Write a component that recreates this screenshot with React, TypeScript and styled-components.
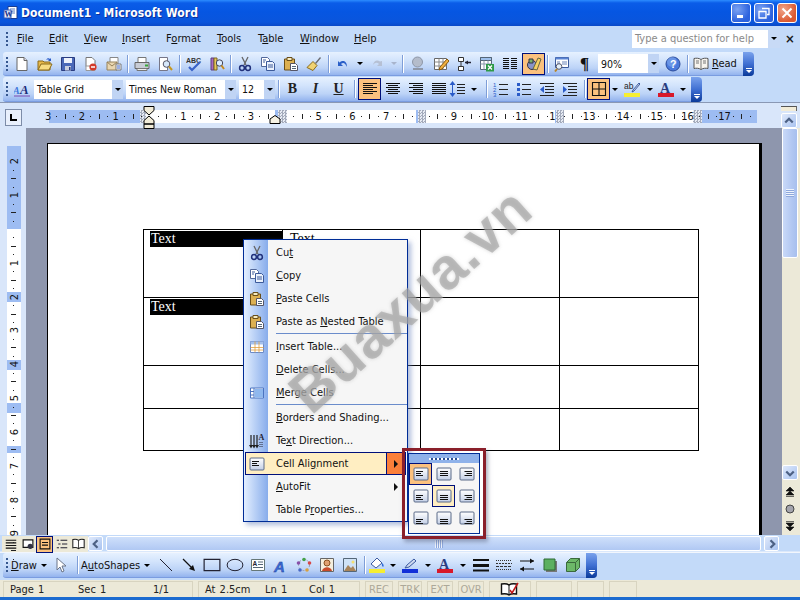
import React from 'react';
import styled, { createGlobalStyle } from 'styled-components';

const uiFont = `"DejaVu Sans Condensed", "DejaVu Sans", sans-serif`;

const Global = createGlobalStyle`
    html, body { margin: 0; padding: 0; overflow: hidden; background: #c3daf9; }
    * { box-sizing: border-box; }
`;

const Window = styled.div`
    position: relative;
    width: 800px;
    height: 600px;
    overflow: hidden;
    display: flex;
    flex-direction: column;
    background: #c3daf9;
    font-family: ${uiFont};
    font-size: 11px;
    color: #111;
`;

const TitleBar = styled.div`
    height: 26px;
    flex: none;
    display: flex;
    align-items: center;
    padding: 0 3px 0 3px;
    background: linear-gradient(to bottom, #2c8cff 0, #0a5ce8 3px, #0656e2 12px, #0a55dc 22px, #0a49c8 26px);
`;

const Title = styled.span`
    margin-left: 2px;
    color: #fff;
    font-size: 12px;
    font-weight: bold;
    letter-spacing: 0.1px;
    text-shadow: 1px 1px 0 #0a2f98;
    flex: 1;
`;

const WinBtn = styled.div<{ $close?: boolean }>`
    width: 20px;
    height: 20px;
    margin-left: 3px;
    border: 1px solid #fff;
    border-radius: 3px;
    display: flex;
    align-items: center;
    justify-content: center;
    background: ${({ $close }) =>
        $close
            ? 'radial-gradient(circle at 30% 30%, #f0a58a, #dc5a32 70%)'
            : 'radial-gradient(circle at 30% 30%, #7ba2f2, #2c62de 70%)'};
`;

const MenuBar = styled.div`
    height: 25px;
    flex: none;
    display: flex;
    align-items: center;
    padding-left: 3px;
    background: #c3daf9;
`;

const MenuItems = styled.div`
    display: flex;
    flex: 1;
    margin-left: 2px;
    margin-top: -1px;
`;

const MenuLabel = styled.span<{ $w: number }>`
    width: ${({ $w }) => $w}px;
    padding-left: 5px;
    font-size: 11px;
    white-space: nowrap;
`;

const Key = styled.span`
    text-decoration: underline;
`;

const HelpBox = styled.div`
    width: 148px;
    height: 18px;
    display: flex;
    background: #fff;
    color: #8a8a8a;
    font-size: 11px;
    align-items: center;
    padding-left: 3px;
    justify-content: space-between;
`;

const HelpArrow = styled.div`
    width: 12px;
    height: 18px;
    background: #c8daf6;
    display: flex;
    align-items: center;
    justify-content: center;
`;

const CloseDoc = styled.div`
    width: 20px;
    margin-right: 0;
    text-align: center;
    font-size: 13px;
    font-weight: bold;
    color: #1a1a1a;
`;

const Band = styled.div<{ $h: number }>`
    height: ${({ $h }) => $h}px;
    flex: none;
    display: flex;
    align-items: flex-end;
    padding-left: 3px;
    background: #c3daf9;
`;

const Toolbar = styled.div<{ $w: number; $h: number; $lift?: number }>`
    width: ${({ $w }) => $w}px;
    height: ${({ $h }) => $h}px;
    margin-bottom: ${({ $lift }) => $lift ?? 0}px;
    display: flex;
    align-items: center;
    border-radius: 3px 4px 4px 3px;
    background: linear-gradient(to bottom, #e6f1ff 0, #d3e4fc 35%, #bcd3f7 70%, #93b3ee 100%);
    border-bottom: 1px solid #7a9ce0;
`;

const Gripper = styled.div`
    width: 2px;
    height: 14px;
    margin: 0 2px 0 3px;
    flex: none;
    background: repeating-linear-gradient(to bottom, #35578f 0, #35578f 2px, transparent 2px, transparent 4px);
`;

const Tool = styled.div<{ $w?: number; $active?: boolean; $left?: number }>`
    width: ${({ $w }) => $w ?? 23}px;
    height: 22px;
    flex: none;
    margin-left: ${({ $left }) => $left ?? 0}px;
    display: flex;
    align-items: center;
    justify-content: center;
    ${({ $active }) => ($active ? 'background: #fbc17e; border: 1px solid #00107a;' : '')}
`;

const Sep = styled.div<{ $w?: number }>`
    width: ${({ $w }) => $w ?? 5}px;
    height: 18px;
    flex: none;
    display: flex;
    justify-content: center;
    &::before {
        content: '';
        width: 1px;
        background: #7e9ed8;
        box-shadow: 1px 0 0 #fff;
    }
`;

const Drop = styled.div<{ $off?: boolean }>`
    width: 0;
    height: 0;
    border-left: 3px solid transparent;
    border-right: 3px solid transparent;
    border-top: 3px solid ${({ $off }) => ($off ? '#a8b4cc' : '#000')};
`;

const DropTool = styled.div<{ $w?: number }>`
    width: ${({ $w }) => $w ?? 11}px;
    height: 22px;
    flex: none;
    display: flex;
    align-items: center;
    justify-content: center;
`;

const Chevron = styled.div`
    width: 11px;
    align-self: stretch;
    margin-left: auto;
    margin-bottom: -1px;
    border-radius: 0 4px 4px 0;
    background: linear-gradient(to bottom, #7aa2ec 0, #3f6fd2 50%, #0b3a9a 100%);
    display: flex;
    flex-direction: column;
    align-items: center;
    justify-content: flex-end;
    padding-bottom: 3px;
    gap: 1px;
    &::before {
        content: '';
        width: 6px;
        height: 1px;
        background: #fff;
    }
    &::after {
        content: '';
        border-left: 3px solid transparent;
        border-right: 3px solid transparent;
        border-top: 3px solid #fff;
    }
`;

const Combo = styled.div<{ $w: number; $left?: number; $right?: number }>`
    width: ${({ $w }) => $w}px;
    height: 19px;
    flex: none;
    display: flex;
    align-items: center;
    justify-content: space-between;
    background: #fff;
    padding-left: 3px;
    font-size: 10.5px;
    white-space: nowrap;
    margin-left: ${({ $left }) => $left ?? 0}px;
    margin-right: ${({ $right }) => $right ?? 3}px;
`;

const ComboArrow = styled.div`
    width: 11px;
    height: 19px;
    background: #c0d4f4;
    display: flex;
    align-items: center;
    justify-content: center;
`;

const FmtLetter = styled.span<{ $i?: boolean; $u?: boolean }>`
    font-family: "Liberation Serif", serif;
    font-size: 14px;
    font-weight: bold;
    font-style: ${({ $i }) => ($i ? 'italic' : 'normal')};
    text-decoration: ${({ $u }) => ($u ? 'underline' : 'none')};
    color: #222;
`;

const Pilcrow = styled.span`
    font-family: "Liberation Serif", serif;
    font-size: 17px;
    font-weight: bold;
`;

const ReadBtn = styled.div`
    width: 50px;
    flex: none;
    display: flex;
    align-items: center;
    gap: 3px;
    padding-left: 3px;
    font-size: 11px;
`;

const TextTool = styled.div<{ $w: number }>`
    width: ${({ $w }) => $w}px;
    flex: none;
    display: flex;
    align-items: center;
    gap: 4px;
    font-size: 11px;
    padding-left: 1px;
`;

const RulerRow = styled.div`
    height: 26px;
    flex: none;
    position: relative;
    display: flex;
    align-items: flex-start;
    padding: 6px 3px 0 5px;
    background: #d9e6fa;
    border-top: 1px solid #8a98b4;
`;

const TabSelector = styled.div`
    width: 17px;
    height: 17px;
    flex: none;
    border: 1px solid #7d8ca8;
    background: #e9f0fc;
    display: flex;
    align-items: center;
    justify-content: center;
`;

const HRuler = styled.div`
    position: relative;
    width: 708px;
    height: 13px;
    margin-left: 27px;
    margin-top: 1px;
    display: flex;
`;

const Seg = styled.div<{ $w: number; $kind: 'blue' | 'white' | 'hatch' }>`
    width: ${({ $w }) => $w}px;
    flex: none;
    background: ${({ $kind }) =>
        $kind === 'blue'
            ? '#9dbcf2'
            : $kind === 'white'
              ? '#fff'
              : 'repeating-conic-gradient(#a4abbb 0 25%, #e8ecf4 0 50%) 0 0 / 3px 3px'};
`;

const HNum = styled.span`
    position: absolute;
    top: -1px;
    width: 16px;
    margin-left: -8px;
    text-align: center;
    font-size: 11px;
    line-height: 15px;
    color: #111;
`;

const HTick = styled.i<{ $long?: boolean }>`
    position: absolute;
    width: 1px;
    top: ${({ $long }) => ($long ? 4 : 6)}px;
    height: ${({ $long }) => ($long ? 5 : 1)}px;
    background: #222;
`;

const Indent = styled.svg`
    position: absolute;
    overflow: visible;
`;

const SplitCol = styled.div`
    position: absolute;
    right: 3px;
    top: 3px;
    width: 16px;
    display: flex;
    flex-direction: column;
    gap: 2px;
`;

const SplitBox = styled.div`
    height: 5px;
    background: #f2ecd8;
    border-top: 1px solid #555;
    border-right: 1px solid #666;
`;

const ScrollBtn = styled.div<{ $w?: number }>`
    width: ${({ $w }) => $w ?? 15}px;
    height: 15px;
    flex: none;
    border: 1px solid #fff;
    border-radius: 2px;
    background: linear-gradient(135deg, #dfe9fb, #a9c3f0);
    display: flex;
    align-items: center;
    justify-content: center;
`;

const Middle = styled.div`
    height: 407px;
    flex: none;
    display: flex;
`;

const VRulerCol = styled.div`
    width: 26px;
    flex: none;
    background: #d9e6fa;
    padding: 18px 5px 0 7px;
`;

const VRuler = styled.div`
    position: relative;
    width: 14px;
    height: 389px;
    display: flex;
    flex-direction: column;
`;

const VSeg = styled.div<{ $h: number; $blue?: boolean }>`
    height: ${({ $h }) => $h}px;
    flex: none;
    background: ${({ $blue }) => ($blue ? '#9dbcf2' : '#fff')};
`;

const VNum = styled.span`
    position: absolute;
    left: 0;
    width: 14px;
    height: 14px;
    margin-top: -7px;
    display: flex;
    align-items: center;
    justify-content: center;
    transform: rotate(-90deg);
    font-size: 11px;
`;

const VTick = styled.i<{ $long?: boolean }>`
    position: absolute;
    left: ${({ $long }) => ($long ? 4 : 6)}px;
    width: ${({ $long }) => ($long ? 5 : 1)}px;
    height: 1px;
    background: #222;
`;

const Workspace = styled.div`
    flex: 1;
    overflow: hidden;
    background: #8e96ad;
    padding: 15px 0 0 21px;
`;

const Page = styled.div`
    width: 715px;
    height: 420px;
    padding: 85px 0 0 95px;
    background: #fff;
    border-top: 1px solid #000;
    border-left: 1px solid #000;
    border-right: 3px solid #000;
`;

const DocTable = styled.table`
    border-collapse: collapse;
    table-layout: fixed;
    width: 555px;
    font-family: "Liberation Serif", serif;
    font-size: 14px;
`;

const Td = styled.td<{ $h: number }>`
    height: ${({ $h }) => $h}px;
    border: 1px solid #000;
    vertical-align: top;
    padding: 0 0 0 6px;
    line-height: 16px;
`;

const CellText = styled.div<{ $selected?: boolean }>`
    padding-left: 1px;
    background: ${({ $selected }) => ($selected ? '#000' : 'transparent')};
    color: ${({ $selected }) => ($selected ? '#fff' : '#000')};
    margin-right: -1px;
    margin-top: 1px;
`;

const ScrollCol = styled.div`
    width: 18px;
    flex: none;
    display: flex;
    flex-direction: column;
    align-items: center;
    background: #ece9d8;
    padding-right: 3px;
`;

const VThumb = styled.div`
    width: 16px;
    height: 130px;
    flex: none;
    border: 1px solid #fff;
    border-radius: 2px;
    background: linear-gradient(to right, #c9d9f8, #b3c8f2 60%, #a7bfee);
    display: flex;
    align-items: center;
    justify-content: center;
    &::after {
        content: '';
        width: 8px;
        height: 8px;
        background: repeating-linear-gradient(to bottom, #eef3fc 0, #eef3fc 1px, #8ea8dc 1px, #8ea8dc 2px);
    }
`;

const VTrack = styled.div`
    flex: 1;
`;

const Browse = styled.div`
    height: 17px;
    flex: none;
    display: flex;
    align-items: center;
    justify-content: center;
`;

const ScrollGap = styled.div<{ $h: number }>`
    height: ${({ $h }) => $h}px;
    flex: none;
`;

const ViewBar = styled.div`
    height: 18px;
    flex: none;
    display: flex;
    align-items: flex-start;
    padding: 1px 21px 0 2px;
    background: linear-gradient(to bottom, #c3daf9 0, #c3daf9 16px, #f2f6fd 17px);
`;

const ViewBtns = styled.div`
    width: 86px;
    height: 16px;
    flex: none;
    display: flex;
    align-items: center;
    background: #ece9d8;
`;

const ViewBtn = styled.div<{ $active?: boolean }>`
    width: 17px;
    height: 17px;
    flex: none;
    display: flex;
    align-items: center;
    justify-content: center;
    ${({ $active }) => ($active ? 'background: #fbc17e; border: 1px solid #00107a;' : '')}
`;

const HTrack = styled.div`
    flex: 1;
    height: 15px;
    margin: 0 3px 0 3px;
    border: 1px solid #fff;
    border-radius: 2px;
    background: linear-gradient(to bottom, #cfe0fb, #b0c8f3);
    display: flex;
    align-items: center;
    justify-content: center;
    &::after {
        content: '';
        width: 8px;
        height: 8px;
        margin-left: 10px;
        background: repeating-linear-gradient(to right, #eef3fc 0, #eef3fc 1px, #8ea8dc 1px, #8ea8dc 2px);
    }
`;

const StatusBar = styled.div`
    height: 17px;
    flex: none;
    display: flex;
    align-items: center;
    padding-left: 3px;
    gap: 5px;
    background: #ece9d8;
`;

const StatusCell = styled.div<{ $w: number; $off?: boolean }>`
    position: relative;
    width: ${({ $w }) => $w}px;
    height: 16px;
    flex: none;
    display: flex;
    align-items: center;
    justify-content: ${({ $off }) => ($off ? 'center' : 'flex-start')};
    border: 1px solid #d8d4c0;
    border-bottom: 0;
    font-size: 11px;
    word-spacing: 1px;
    white-space: nowrap;
    color: ${({ $off }) => ($off ? '#aca899' : '#222')};
`;

const BookCell = styled(StatusCell)`
    justify-content: center;
`;

const StatusText = styled.span<{ $w: number }>`
    width: ${({ $w }) => $w}px;
    flex: none;
    padding-left: 6px;
`;

const BottomEdge = styled.div`
    height: 3px;
    flex: none;
    background: #1c6bd0;
`;

const CtxMenu = styled.div`
    position: absolute;
    left: 243px;
    top: 239px;
    width: 165px;
    padding-top: 1px;
    border: 1px solid #002d96;
    background: linear-gradient(to right, #e3efff, #87aceb) left / 24px 100% no-repeat, #f6f6f6;
    box-shadow: 3px 3px 5px rgba(110, 135, 190, 0.55);
    z-index: 2;
`;

const CtxItem = styled.div<{ $hot?: boolean }>`
    position: relative;
    height: 23px;
    margin: 0 1px;
    display: flex;
    align-items: center;
    font-size: 11px;
    color: #111;
    ${({ $hot }) => ($hot ? 'background: #ffeec2; outline: 1px solid #00107a; outline-offset: -1px;' : '')}
`;

const CtxIcon = styled.div`
    width: 23px;
    flex: none;
    display: flex;
    align-items: center;
    justify-content: center;
`;

const CtxLabel = styled.span`
    margin-left: 8px;
    white-space: nowrap;
`;

const CtxSep = styled.div`
    height: 2px;
    margin-left: 32px;
    border-top: 1px solid #6a8ccb;
`;

const SubArrow = styled.div<{ $hot?: boolean }>`
    position: absolute;
    right: 0;
    top: 0;
    bottom: 0;
    width: 20px;
    display: flex;
    align-items: center;
    justify-content: center;
    ${({ $hot }) => ($hot ? 'background: #fb7f3a; border: 1px solid #00107a;' : '')}
    &::after {
        content: '';
        border-top: 4px solid transparent;
        border-bottom: 4px solid transparent;
        border-left: 4px solid #111;
    }
`;

const RedFrame = styled.div`
    position: absolute;
    left: 402px;
    top: 448px;
    width: 84px;
    height: 91px;
    border: 3px solid #8a1f2a;
    padding: 2px 2px 0 3px;
    box-shadow: 2px 3px 4px rgba(90, 100, 130, 0.5);
    z-index: 3;
`;

const Palette = styled.div`
    width: 72px;
    height: 81px;
    border: 1px solid #002d96;
    background: #f6f6f6;
`;

const PaletteTitle = styled.div`
    height: 9px;
    background: #8fb2ea;
    display: flex;
    align-items: center;
    justify-content: center;
    &::after {
        content: '';
        width: 30px;
        height: 2px;
        background: repeating-linear-gradient(to right, #fff 0, #fff 2px, #2a4d94 2px, #2a4d94 4px);
    }
`;

const PaletteGrid = styled.div`
    display: grid;
    grid-template-columns: repeat(3, 23px);
    grid-auto-rows: 22px;
`;

const PaletteCell = styled.div<{ $state?: 'on' | 'hover' }>`
    display: flex;
    align-items: center;
    justify-content: center;
    ${({ $state }) =>
        $state === 'on'
            ? 'background: #fbc17e; border: 1px solid #00107a;'
            : $state === 'hover'
              ? 'background: #ffeec2; border: 1px solid #00107a;'
              : ''}
`;

const Watermark = styled.div`
    position: absolute;
    left: 259px;
    top: 265px;
    transform: rotate(-42deg);
    font-family: "Liberation Sans", sans-serif;
    font-size: 58px;
    line-height: 70px;
    font-weight: bold;
    letter-spacing: 1px;
    color: rgba(160, 160, 160, 0.6);
    text-shadow: 0 0 4px rgba(175, 175, 175, 0.55);
    white-space: nowrap;
    z-index: 2;
    pointer-events: none;
`;

/* ---------- icons ---------- */

const Svg = styled.svg`
    display: block;
    flex: none;
`;

function Ic({ s = 16, w, h, children }: { s?: number; w?: number; h?: number; children: React.ReactNode }) {
    const vw = w ?? s;
    const vh = h ?? s;
    return (
        <Svg width={vw} height={vh} viewBox="0 0 16 16" preserveAspectRatio="none">
            {children}
        </Svg>
    );
}

const NewIcon = () => (
    <Ic>
        <path d="M3 1.500h7l3 3v10H3z" fill="#fff" stroke="#666" />
        <path d="M10 1.500v3h3" fill="#dde" stroke="#666" />
    </Ic>
);
const OpenIcon = () => (
    <Ic>
        <path d="M1 5h5l1 1h6v8H1z" fill="#e8b94a" stroke="#8a6a1a" />
        <path d="M1 14l3-6h11l-3 6z" fill="#f8dc82" stroke="#8a6a1a" />
        <path d="M9 4c1-2 3-2 4-1l1-1v3h-3l1-1c-1-.6-2-.4-3 0z" fill="#2a5bc8" />
    </Ic>
);
const SaveIcon = () => (
    <Ic>
        <path d="M1.500 1.500h13v13h-13z" fill="#4a68b8" stroke="#2a3c80" />
        <path d="M4 2h8v5H4z" fill="#eef2fb" />
        <path d="M5 10h6v4.500H5z" fill="#c9cfdf" />
        <path d="M9 11h1.500v3H9z" fill="#2a3c80" />
    </Ic>
);
const PermIcon = () => (
    <Ic>
        <path d="M3 1.500h6l3 3v6H3z" fill="#fff" stroke="#777" />
        <path d="M3 10h9v4.500H3z" fill="#fff" stroke="#999" />
        <circle cx="10" cy="11" r="3.600" fill="#d23a2a" />
        <path d="M8 11h4" stroke="#fff" strokeWidth="1.500" />
    </Ic>
);
const MailIcon = () => (
    <Ic>
        <path d="M4 1.500h8v9H4z" fill="#fff" stroke="#888" />
        <path d="M1 6h10v8H1z" fill="#e9d6b0" stroke="#97825a" />
        <path d="M1 6l5 4 5-4" fill="none" stroke="#97825a" />
        <path d="M10 8h5v6h-5z" fill="#fdfdfd" stroke="#7b7b7b" />
        <path d="M11 10h3M11 12h3" stroke="#3b62c8" />
    </Ic>
);
const PrintIcon = () => (
    <Ic>
        <path d="M4 1.500h8v5H4z" fill="#fff" stroke="#777" />
        <path d="M1 6.500h14v6H1z" fill="#c8ccd6" stroke="#666" />
        <path d="M11 8.500h3v2h-3z" fill="#3aa83a" />
        <path d="M3 12.500h10v2H3z" fill="#eee" stroke="#777" />
    </Ic>
);
const PreviewIcon = () => (
    <Ic>
        <path d="M2.500 1.500h8v13h-8z" fill="#fff" stroke="#778" />
        <circle cx="9.500" cy="8" r="3.300" fill="#d6e8fa" stroke="#556" />
        <path d="M12 10.500l3 3.500" stroke="#c6981e" strokeWidth="2" />
    </Ic>
);
const SpellIcon = () => (
    <Ic>
        <text x="0" y="6.500" fontSize="7" fontWeight="bold" fontFamily="Liberation Sans" fill="#333">
            ABC
        </text>
        <path d="M3 11l3 3 8-8" fill="none" stroke="#3a62c8" strokeWidth="2.200" />
    </Ic>
);
const ResearchIcon = () => (
    <Ic>
        <path d="M2 2h3v12H2z" fill="#a86ac0" stroke="#5a3c80" />
        <path d="M5 2h3v12H5z" fill="#e8c85a" stroke="#7a6420" />
        <circle cx="10.500" cy="7" r="3.200" fill="#dcecff" stroke="#445" />
        <path d="M12.500 9.500l2.500 3.500" stroke="#c68a1e" strokeWidth="2" />
    </Ic>
);
const CutIcon = () => (
    <Ic>
        <path d="M5 1l4 8M11 1L7 9" stroke="#666" strokeWidth="1.300" fill="none" />
        <circle cx="5" cy="12" r="2.400" fill="none" stroke="#20307a" strokeWidth="1.500" />
        <circle cx="11" cy="12" r="2.400" fill="none" stroke="#20307a" strokeWidth="1.500" />
    </Ic>
);
const CopyIcon = () => (
    <Ic>
        <path d="M1.500 1.500h6l2 2v7h-8z" fill="#fff" stroke="#52689a" />
        <path d="M6.500 5.500h6l2 2v7h-8z" fill="#eaf1fc" stroke="#3c5a9a" />
        <path d="M3 4h3M3 6h2M8 9h5M8 11h5" stroke="#3c5a9a" />
    </Ic>
);
const PasteIcon = () => (
    <Ic>
        <path d="M1.500 3h10v11h-10z" fill="#dcb052" stroke="#6a4e18" />
        <path d="M4 1.500h5v3H4z" fill="#f7ecc2" stroke="#6a4e18" />
        <path d="M7.500 7.500h5l2 2v5h-7z" fill="#fff" stroke="#556" />
        <path d="M9 10.500h4M9 12.500h4" stroke="#567" />
    </Ic>
);
const PainterIcon = () => (
    <Ic>
        <path d="M9 7l5-6 1 1-5 6z" fill="#6a6a70" />
        <path d="M7 5.500l4 4-4 5-6-3z" fill="#f0d272" stroke="#8a6a1a" />
    </Ic>
);
const UndoIcon = ({ off }: { off?: boolean }) => (
    <Ic>
        <path
            d={off ? 'M13 5v5H8l2-2c-2-2-4-1.500-6 1 .5-4 4-6 7-3.500z' : 'M3 5v5h5L6 8c2-2 4-1.500 6 3 0-5-3-8-7.500-4.500z'}
            fill={off ? '#b6c0d4' : '#2a5fc8'}
        />
    </Ic>
);
const LinkIcon = () => (
    <Ic>
        <circle cx="7.500" cy="6" r="5" fill="#b4bccb" stroke="#8e97a8" />
        <path d="M3 13h10" stroke="#8e97a8" strokeWidth="2" />
    </Ic>
);
const TablesIcon = () => (
    <Ic>
        <path d="M1.500 2.500h12v11h-12z" fill="#fff" stroke="#666" />
        <path d="M1.500 6h12M1.500 10h12M6 2.500v11M10 2.500v11" stroke="#8a8a8a" />
        <path d="M6 14l1-3 7-8 2 2-7 8z" fill="#f0b040" stroke="#8a5a10" />
    </Ic>
);
const InsertBoxesIcon = () => (
    <Ic>
        <path d="M2.500 1.500h5v4h-5zM2.500 10.500h5v4h-5z" fill="#fff" stroke="#333" />
        <path d="M5 6v4" stroke="#333" />
        <path d="M9 6.500h6" stroke="#223" strokeWidth="1.500" />
        <path d="M9 6.500l3-2v4z" fill="#223" />
    </Ic>
);
const ExcelIcon = () => (
    <Ic>
        <path d="M1.500 1.500h11v12h-11z" fill="#fff" stroke="#567" />
        <path d="M1.500 1.500h11v3h-11z" fill="#9ec0ec" stroke="#567" />
        <path d="M5 4.500v9M9 4.500v9M1.500 8h11" stroke="#89a" />
        <path d="M7 8h8v7.500H7z" fill="#2e9a48" />
        <path d="M9 9.500l4 4M13 9.500l-4 4" stroke="#fff" strokeWidth="1.300" />
    </Ic>
);
const ColumnsIcon = () => (
    <Ic>
        <path d="M1 2.500h6M9 2.500h6M1 4.500h6M9 4.500h6M1 6.500h6M9 6.500h6M1 8.500h6M9 8.500h6M1 10.500h6M9 10.500h6M1 12.500h6M9 12.500h6" stroke="#111" />
    </Ic>
);
const DrawingIcon = () => (
    <Ic>
        <circle cx="6" cy="9" r="4.500" fill="#8894c8" stroke="#334" />
        <path d="M7 13l5-11 3 1-4 11z" fill="#f4d060" stroke="#664" />
        <path d="M3 3h4v4H3z" fill="#7ab06a" stroke="#334" />
    </Ic>
);
const DocMapIcon = () => (
    <Ic>
        <path d="M1.500 1.500h13v10h-13z" fill="#fff" stroke="#3c5a9a" />
        <path d="M1.500 1.500h13v2h-13z" fill="#5a84d4" />
        <path d="M8 6h5M8 8h5M3 6h3M3 8h3" stroke="#6a84b8" />
        <circle cx="5" cy="10.500" r="2.800" fill="#e4f0fa" stroke="#556" />
        <path d="M3 13l-2 2.500" stroke="#b8862a" strokeWidth="2" />
    </Ic>
);
const HelpIcon = () => (
    <Ic>
        <circle cx="8" cy="8" r="7" fill="#4a7adc" stroke="#2a4a9a" />
        <circle cx="7" cy="6" r="5" fill="#8ab0f0" opacity=".5" />
        <text x="5" y="12" fontSize="10.500" fontWeight="bold" fontFamily="Liberation Sans" fill="#fff">
            ?
        </text>
    </Ic>
);
const BookIcon = () => (
    <Ic>
        <path d="M8 3.500C6 2 3 2 1 2.500v10c2-.5 5-.5 7 1 2-1.500 5-1.500 7-1v-10c-2-.5-5-.5-7 1z" fill="#f7f4ee" stroke="#555" />
        <path d="M8 3.500v10M3 5h3M3 7h3M10 5h3M10 7h3" stroke="#777" />
    </Ic>
);
const StylesIcon = () => (
    <Ic>
        <text x="-1" y="13" fontSize="10" fontStyle="italic" fontWeight="bold" fontFamily="Liberation Serif" fill="#3f78dc">
            A
        </text>
        <text x="6" y="13" fontSize="13" fontStyle="italic" fontWeight="bold" fontFamily="Liberation Serif" fill="#1c2f7c">
            A
        </text>
        <path d="M0 15h16" stroke="#7a4ab0" />
    </Ic>
);
const AlignIcon = ({ kind }: { kind: 'l' | 'c' | 'r' | 'j' }) => {
    const rows = [2.5, 4.5, 6.5, 8.5, 10.5, 12.5];
    return (
        <Ic>
            {rows.map((y, i) => {
                const short = kind !== 'j' && i % 2 === 1;
                const x1 = !short || kind === 'l' ? 1 : kind === 'c' ? 3 : 5;
                const x2 = !short ? 15 : kind === 'l' ? 11 : kind === 'c' ? 13 : 15;
                return <path key={y} d={`M${x1} ${y}H${x2}`} stroke="#111" />;
            })}
        </Ic>
    );
};
const SpacingIcon = () => (
    <Ic>
        <path d="M3.500 3v10" stroke="#2a5bc8" />
        <path d="M3.500 0l3 4h-6zM3.500 16l3-4h-6z" fill="#2a5bc8" />
        <path d="M8 3.500h8M8 6.500h8M8 9.500h8M8 12.500h8" stroke="#222" />
    </Ic>
);
const NumberIcon = () => (
    <Ic>
        <text x="0" y="6" fontSize="6" fill="#2a5bc8" fontFamily="Liberation Sans">1</text>
        <text x="0" y="11" fontSize="6" fill="#2a5bc8" fontFamily="Liberation Sans">2</text>
        <text x="0" y="16" fontSize="6" fill="#2a5bc8" fontFamily="Liberation Sans">3</text>
        <path d="M6 3.500h9M6 8.500h9M6 13.500h9" stroke="#222" />
    </Ic>
);
const BulletIcon = () => (
    <Ic>
        <path d="M1 2h3v3H1zM1 7h3v3H1zM1 12h3v3H1z" fill="#2a5bc8" />
        <path d="M6 3.500h9M6 8.500h9M6 13.500h9" stroke="#222" />
    </Ic>
);
const IndentIcon = ({ inc }: { inc?: boolean }) => (
    <Ic>
        <path d="M1 2.500h14M6 5.500h9M6 8.500h9M6 11.500h9M1 14.500h14" stroke="#222" />
        <path d={inc ? 'M1 5l4 3.500-4 3.500z' : 'M5 5L1 8.500 5 12z'} fill="#2a5bc8" />
    </Ic>
);
const BordersIcon = () => (
    <Ic>
        <path d="M1.500 1.500h13v13h-13zM8 1.500v13M1.500 8h13" fill="none" stroke="#111" strokeWidth="1.100" />
    </Ic>
);
const HighlightIcon = () => (
    <Ic>
        <text x="0" y="8" fontSize="8.500" fontFamily="Liberation Sans" fill="#222">ab</text>
        <path d="M8 11l1-2 6-7 1 1-6 7z" fill="#d8dfe8" stroke="#3b5aa0" />
        <path d="M0 12h16v4H0z" fill="#f6ee32" />
    </Ic>
);
const ColorA = ({ bar }: { bar: string }) => (
    <Ic>
        <text x="2" y="11.500" fontSize="14" fontWeight="bold" fontFamily="Liberation Serif" fill="#2a3c80">A</text>
        <path d="M0 12h16v4H0z" fill={bar} />
    </Ic>
);
const LineColorIcon = () => (
    <Ic>
        <path d="M3 11l2-3 7-6 2 2-7 6z" fill="#cdd8ee" stroke="#3b5aa0" />
        <path d="M0 12h16v4H0z" fill="#1230d8" />
    </Ic>
);
const FillIcon = () => (
    <Ic>
        <path d="M2 7l6-6 5 5-6 5z" fill="#fff" stroke="#3b5aa0" />
        <path d="M13 6c2 1.500 2 3 1 4-1-1-1.500-2-1-4z" fill="#2a6ad8" />
        <path d="M0 12h16v4H0z" fill="#f6ee32" />
    </Ic>
);
const CursorIcon = () => (
    <Ic>
        <path d="M4 1v12l3-3 2 5 2-1-2-5h4z" fill="#fff" stroke="#6a7488" />
    </Ic>
);
const LineIcon = () => (
    <Ic>
        <path d="M2 2l12 12" stroke="#223" />
    </Ic>
);
const ArrowIcon = () => (
    <Ic>
        <path d="M2 2l10 10" stroke="#111" strokeWidth="1.200" />
        <path d="M14 14l-6-2 4-4z" fill="#111" />
    </Ic>
);
const RectIcon = () => (
    <Ic w={18} h={14}>
        <path d="M1 1.500h14v13H1z" fill="none" stroke="#223" strokeWidth="1.200" vectorEffect="non-scaling-stroke" />
    </Ic>
);
const OvalIcon = () => (
    <Ic w={18} h={14}>
        <ellipse cx="8" cy="8" rx="7" ry="6.500" fill="none" stroke="#223" strokeWidth="1" vectorEffect="non-scaling-stroke" />
    </Ic>
);
const TextBoxIcon = () => (
    <Ic>
        <path d="M1.500 2.500h13v11h-13z" fill="#fff" stroke="#677" />
        <text x="2.500" y="8.500" fontSize="6.500" fontWeight="bold" fontFamily="Liberation Sans" fill="#223">A</text>
        <path d="M8 5h5M8 7.500h5M3 10.500h10" stroke="#567" />
    </Ic>
);
const WordArtIcon = () => (
    <Ic>
        <text x="1" y="14.500" fontSize="15" fontStyle="italic" fontWeight="bold" fontFamily="Liberation Sans" fill="#3b6ad8" stroke="#1a3c90" strokeWidth=".4">
            A
        </text>
    </Ic>
);
const DiagramIcon = () => (
    <Ic>
        <circle cx="8" cy="8" r="5.500" fill="none" stroke="#99a" strokeDasharray="2 2" />
        <circle cx="8" cy="2.500" r="1.800" fill="#44a048" />
        <circle cx="13.500" cy="6" r="1.800" fill="#d84848" />
        <circle cx="11" cy="13" r="1.800" fill="#d8a040" />
        <circle cx="4" cy="13" r="1.800" fill="#4868c8" />
        <circle cx="2.500" cy="6" r="1.800" fill="#8850a8" />
    </Ic>
);
const ClipartIcon = () => (
    <Ic>
        <path d="M1.500 1.500h13v13h-13z" fill="#f4eedd" stroke="#666" />
        <circle cx="8" cy="6" r="3" fill="#e0a070" stroke="#8a5020" />
        <path d="M3 14c1-5 9-5 10 0z" fill="#c84a2a" />
    </Ic>
);
const PictureIcon = () => (
    <Ic>
        <path d="M1.500 1.500h13v13h-13z" fill="#cfe2f6" stroke="#567" />
        <path d="M2 14l4-6 3 3 2-2 3 5z" fill="#a8845a" />
        <circle cx="11" cy="5" r="1.500" fill="#f4e070" />
    </Ic>
);
const LineStyleIcon = () => (
    <Ic>
        <path d="M0 3h16" stroke="#111" strokeWidth="2" />
        <path d="M0 8.500h16" stroke="#111" strokeWidth="3" />
        <path d="M0 13.500h16" stroke="#111" strokeWidth="2" />
    </Ic>
);
const DashIcon = () => (
    <Ic>
        <path d="M0 3.500h16" stroke="#333" strokeDasharray="1 1" />
        <path d="M0 6.500h16" stroke="#333" strokeDasharray="2 1" />
        <path d="M0 9.500h16" stroke="#333" strokeDasharray="3 1" />
        <path d="M0 12.500h16" stroke="#333" strokeDasharray="1 1" />
    </Ic>
);
const ArrowStyleIcon = () => (
    <Ic>
        <path d="M1 4h14M1 12h14" stroke="#111" />
        <path d="M15 4l-4-2.500v5zM1 12l4-2.500v5z" fill="#111" />
    </Ic>
);
const ShadowIcon = () => (
    <Ic>
        <path d="M4 4h11v11H4z" fill="#777" />
        <path d="M2 2h11v11H2z" fill="#5cb060" stroke="#2e6a34" />
    </Ic>
);
const CubeIcon = () => (
    <Ic>
        <path d="M1.500 5.500l4-4h9v9l-4 4h-9z" fill="#6cb868" stroke="#3a6a3c" />
        <path d="M1.500 5.500h9v9M10.500 5.500l4-4" fill="none" stroke="#3a6a3c" />
    </Ic>
);
const WordLogo = () => (
    <Ic>
        <path d="M5 1.500h9v12H5z" fill="#fff" stroke="#1a3c90" />
        <path d="M7 4h5M7 6h5M7 8h5" stroke="#5a7ac0" />
        <path d="M1 5h7v8H1z" fill="#e7eefb" stroke="#3a5fb8" />
        <text x="1.500" y="12" fontSize="8" fontWeight="bold" fontFamily="Liberation Serif" fill="#12308a">W</text>
    </Ic>
);
const InsertTableIcon = () => (
    <Ic>
        <path d="M1.500 2.500h13v11h-13z" fill="#fff" stroke="#6a8ac8" />
        <path d="M1.500 2.500h13v3h-13z" fill="#a4c0ec" />
        <path d="M1.500 8.500h13M1.500 11h13M6 2.500v11M10 2.500v11" stroke="#e0a040" strokeWidth=".8" />
    </Ic>
);
const MergeIcon = () => (
    <Ic>
        <path d="M1.500 3h13v10h-13z" fill="#fff" stroke="#4c74c0" />
        <path d="M5 3v10M1.500 6.500H5M1.500 10H5" stroke="#4c74c0" />
        <path d="M5.500 4h8.500v8.500H5.500z" fill="#8fb8ee" />
    </Ic>
);
const TextDirIcon = () => (
    <Ic>
        <path d="M2 2v11M5 2v11M8 2v11" stroke="#222" strokeWidth="1.200" />
        <path d="M0 12l2 3.500 2-3.500zM3 12l2 3.500 2-3.500zM6 12l2 3.500 2-3.500z" fill="#222" />
        <text x="9.500" y="7" fontSize="8" fontWeight="bold" fontFamily="Liberation Serif" fill="#223">A</text>
        <path d="M11 9v6M13 9v6" stroke="#223" strokeDasharray="1 1" />
    </Ic>
);

function CellIcon({ col, row, size = 16 }: { col: number; row: number; size?: number }) {
    const startY = [4, 6, 8][row];
    const ys = [startY, startY + 2, startY + 4];
    const spans = [
        [3, 10],
        [4, 12],
        [5.5, 13],
    ][col];
    return (
        <Svg width={size} height={size - 2} viewBox="0 0 16 14">
            <defs>
                <linearGradient id="cellFill" x1="0" y1="0" x2="0" y2="1">
                    <stop offset="0" stopColor="#fff" />
                    <stop offset="1" stopColor="#c3cfe6" />
                </linearGradient>
            </defs>
            <rect x="1" y="1" width="14" height="12" fill="url(#cellFill)" stroke="#5a6a88" rx="1" />
            {ys.map((y, i) => (
                <path key={y} d={`M${spans[0] + (i === 1 && col === 2 ? 2 : 0)} ${y + 0.5}H${spans[1] - (i === 1 && col === 0 ? 2 : 0)}`} stroke="#111" />
            ))}
        </Svg>
    );
}

const MiniChev = ({ dir }: { dir: 'u' | 'd' | 'l' | 'r' }) => {
    const d = { u: 'M3 10l5-5 5 5', d: 'M3 6l5 5 5-5', l: 'M10 3L5 8l5 5', r: 'M6 3l5 5-5 5' }[dir];
    return (
        <Svg width={12} height={12} viewBox="0 0 16 16">
            <path d={d} fill="none" stroke="#4d6185" strokeWidth="3" />
        </Svg>
    );
};

const BrowseIcon = ({ kind }: { kind: 'up' | 'dot' | 'down' }) => (
    <Svg width={12} height={12} viewBox="0 0 12 12">
        {kind === 'dot' && <circle cx="6" cy="6" r="4" fill="#a4a4ac" stroke="#444" />}
        {kind === 'up' && <path d="M6 1l4 4H2zM6 5l4 4H2zM2 10.500h8" fill="#111" stroke="#111" strokeWidth=".6" />}
        {kind === 'down' && <path d="M2 1.500h8M2 3l8 0-4 4zM2 7h8l-4 4z" fill="#111" stroke="#111" strokeWidth=".6" />}
    </Svg>
);

const ViewNormalIcon = () => (
    <Ic s={12}>
        <path d="M1 3h14M1 6.500h14M1 10h14M1 13.500h14" stroke="#111" strokeWidth="1.600" />
    </Ic>
);
const ViewWebIcon = () => (
    <Ic s={12}>
        <path d="M1.500 2.500h13v10h-13z" fill="#fff" stroke="#111" strokeWidth="1.500" />
        <circle cx="11" cy="11" r="3.500" fill="#334" />
    </Ic>
);
const ViewPrintIcon = () => (
    <Ic s={12}>
        <path d="M1.500 1.500h13v13h-13z" fill="none" stroke="#111" strokeWidth="1.500" />
        <path d="M4 6h8M4 9.500h8" stroke="#111" strokeWidth="1.500" />
    </Ic>
);
const ViewOutlineIcon = () => (
    <Ic s={12}>
        <path d="M1 3h3M6 3h9M3 8h3M8 8h7M1 13h3M6 13h9" stroke="#223" strokeWidth="1.500" />
    </Ic>
);
const ViewReadIcon = () => (
    <Ic s={13}>
        <path d="M8 3C6 1.500 3 1.500 1 2v10c2-.5 5-.5 7 1 2-1.500 5-1.500 7-1V2C13 1.500 10 1.500 8 3z" fill="#fff" stroke="#222" strokeWidth="1.300" />
        <path d="M8 3v10" stroke="#222" />
    </Ic>
);
const SpellBookIcon = () => (
    <Svg width={20} height={16} viewBox="0 0 20 16">
        <path d="M9 4C7 2.500 4 2.500 1.500 3v10c2.500-.5 5.500-.5 7.500 1 2-1.500 5-1.500 7.500-1V3C14 2.500 11 2.500 9 4z" fill="#fff" stroke="#111" strokeWidth="1.400" />
        <path d="M9 4v10" stroke="#111" />
        <path d="M10 9l2 3 6-10" fill="none" stroke="#c21818" strokeWidth="1.500" />
    </Svg>
);

/* ---------- rulers ---------- */

const unit = 33.82;
const hZero = 100.5;
const hSegments: [number, 'blue' | 'white' | 'hatch'][] = [
    [91, 'blue'],
    [6, 'hatch'],
    [129, 'white'],
    [3, 'blue'],
    [9, 'hatch'],
    [129, 'white'],
    [2, 'blue'],
    [8, 'hatch'],
    [129, 'white'],
    [1, 'blue'],
    [8, 'hatch'],
    [129, 'white'],
    [9, 'hatch'],
    [55, 'blue'],
];

function HorizontalRuler() {
    const marks = [];
    for (let k = -3; k <= 17; k++) {
        const x = hZero + k * unit;
        if (k !== 0 && k % 4 !== 0) {
            marks.push(
                <HNum key={`n${k}`} style={{ left: x }}>
                    {Math.abs(k)}
                </HNum>,
            );
        } else if (k === 12 || k === 16) {
            marks.push(
                <HNum key={`n${k}`} style={{ left: x - 3 }}>
                    {k === 12 ? '1' : '16'}
                </HNum>,
            );
        }
        marks.push(<HTick key={`a${k}`} style={{ left: x + unit * 0.25 }} />);
        marks.push(<HTick key={`b${k}`} $long style={{ left: x + unit * 0.5 }} />);
        marks.push(<HTick key={`c${k}`} style={{ left: x + unit * 0.75 }} />);
    }
    return (
        <HRuler>
            {hSegments.map(([w, kind], i) => (
                <Seg key={i} $w={w} $kind={kind} />
            ))}
            {marks}
            <Indent width={12} height={23} viewBox="0 0 12 23" style={{ left: 94, top: -4 }}>
                <path d="M1 .5h10v4L6 9 1 4.500zM1 14.500L6 10l5 4.500V18H1zM1 18h10v4.500H1z" fill="#f2ecd8" stroke="#000" />
            </Indent>
            <Indent width={12} height={9} viewBox="0 0 12 9" style={{ left: 220, top: 5 }}>
                <path d="M1 4l5-3.500L11 4v4.500H1z" fill="#f6f2e4" stroke="#000" />
            </Indent>
        </HRuler>
    );
}

function VerticalRuler() {
    const zero = 83;
    const marks = [];
    for (let k = -2; k <= 9; k++) {
        const y = zero + k * unit;
        if (k !== 0) {
            marks.push(
                <VNum key={`n${k}`} style={{ top: y }}>
                    {Math.abs(k)}
                </VNum>,
            );
        }
        marks.push(<VTick key={`a${k}`} style={{ top: y + unit * 0.25 }} />);
        marks.push(<VTick key={`b${k}`} $long style={{ top: y + unit * 0.5 }} />);
        marks.push(<VTick key={`c${k}`} style={{ top: y + unit * 0.75 }} />);
    }
    return (
        <VRuler>
            <VSeg $h={83} $blue />
            <VSeg $h={63} />
            <VSeg $h={10} $blue />
            <VSeg $h={58} />
            <VSeg $h={10} $blue />
            <VSeg $h={33} />
            <VSeg $h={10} $blue />
            <VSeg $h={33} />
            <VSeg $h={7} $blue />
            <VSeg $h={82} />
            {marks}
        </VRuler>
    );
}

const menus: [React.ReactNode, number][] = [
    [<><Key>F</Key>ile</>, 32],
    [<><Key>E</Key>dit</>, 35],
    [<><Key>V</Key>iew</>, 38],
    [<><Key>I</Key>nsert</>, 44],
    [<>F<Key>o</Key>rmat</>, 51],
    [<><Key>T</Key>ools</>, 41],
    [<>T<Key>a</Key>ble</>, 42],
    [<><Key>W</Key>indow</>, 54],
    [<><Key>H</Key>elp</>, 40],
];

const Dropdown = () => (
    <ComboArrow>
        <Drop />
    </ComboArrow>
);

export default function App() {
    return (
        <Window>
            <Global />
            <TitleBar>
                <WordLogo />
                <Title>Document1 - Microsoft Word</Title>
                <WinBtn>
                    <Svg width={12} height={12} viewBox="0 0 12 12">
                        <path d="M2 8h6v3H2z" fill="#fff" />
                    </Svg>
                </WinBtn>
                <WinBtn>
                    <Svg width={12} height={12} viewBox="0 0 12 12">
                        <path d="M4 1.500h7v6H9M1 4.500h7v6.500H1z" fill="none" stroke="#fff" strokeWidth="1.300" />
                    </Svg>
                </WinBtn>
                <WinBtn $close>
                    <Svg width={12} height={12} viewBox="0 0 12 12">
                        <path d="M1.500 1.500l9 9M10.500 1.500l-9 9" stroke="#fff" strokeWidth="2" />
                    </Svg>
                </WinBtn>
            </TitleBar>

            <MenuBar>
                <Gripper />
                <MenuItems>
                    {menus.map(([label, w], i) => (
                        <MenuLabel key={i} $w={w}>
                            {label}
                        </MenuLabel>
                    ))}
                </MenuItems>
                <HelpBox>
                    Type a question for help
                    <HelpArrow>
                        <Drop />
                    </HelpArrow>
                </HelpBox>
                <CloseDoc>×</CloseDoc>
            </MenuBar>

            <Band $h={25}>
                <Toolbar $w={751} $h={24}>
                    <Gripper />
                    <Tool><NewIcon /></Tool>
                    <Tool><OpenIcon /></Tool>
                    <Tool><SaveIcon /></Tool>
                    <Tool><PermIcon /></Tool>
                    <Tool><MailIcon /></Tool>
                    <Sep />
                    <Tool><PrintIcon /></Tool>
                    <Tool><PreviewIcon /></Tool>
                    <Sep $w={6} />
                    <Tool><SpellIcon /></Tool>
                    <Tool><ResearchIcon /></Tool>
                    <Sep />
                    <Tool><CutIcon /></Tool>
                    <Tool><CopyIcon /></Tool>
                    <Tool><PasteIcon /></Tool>
                    <Tool><PainterIcon /></Tool>
                    <Sep $w={6} />
                    <Tool><UndoIcon /></Tool>
                    <DropTool><Drop /></DropTool>
                    <Tool><UndoIcon off /></Tool>
                    <DropTool><Drop $off /></DropTool>
                    <Sep $w={7} />
                    <Tool><LinkIcon /></Tool>
                    <Tool><TablesIcon /></Tool>
                    <Tool><InsertBoxesIcon /></Tool>
                    <Tool><ExcelIcon /></Tool>
                    <Tool><ColumnsIcon /></Tool>
                    <Tool $active $left={1}><DrawingIcon /></Tool>
                    <Sep />
                    <Tool><DocMapIcon /></Tool>
                    <Tool><Pilcrow>¶</Pilcrow></Tool>
                    <Combo $w={61} $left={2}>
                        90%
                        <Dropdown />
                    </Combo>
                    <Tool $w={22}><HelpIcon /></Tool>
                    <Sep $w={6} />
                    <ReadBtn>
                        <BookIcon />
                        <span><Key>R</Key>ead</span>
                    </ReadBtn>
                    <Chevron />
                </Toolbar>
            </Band>

            <Band $h={26}>
                <Toolbar $w={699} $h={25}>
                    <Gripper />
                    <Tool><StylesIcon /></Tool>
                    <Combo $w={89} $left={1}>
                        Table Grid
                        <Dropdown />
                    </Combo>
                    <Combo $w={110}>
                        Times New Roman
                        <Dropdown />
                    </Combo>
                    <Combo $w={36} $right={1}>
                        12
                        <Dropdown />
                    </Combo>
                    <Sep />
                    <Tool><FmtLetter>B</FmtLetter></Tool>
                    <Tool><FmtLetter $i>I</FmtLetter></Tool>
                    <Tool><FmtLetter $u>U</FmtLetter></Tool>
                    <Sep $w={8} />
                    <Tool $active><AlignIcon kind="l" /></Tool>
                    <Tool><AlignIcon kind="c" /></Tool>
                    <Tool><AlignIcon kind="r" /></Tool>
                    <Tool><AlignIcon kind="j" /></Tool>
                    <Tool $w={14}><SpacingIcon /></Tool>
                    <DropTool $w={20}><Drop /></DropTool>
                    <Sep />
                    <Tool><NumberIcon /></Tool>
                    <Tool><BulletIcon /></Tool>
                    <Tool><IndentIcon /></Tool>
                    <Tool><IndentIcon inc /></Tool>
                    <Sep $w={6} />
                    <Tool $active><BordersIcon /></Tool>
                    <DropTool $w={9}><Drop /></DropTool>
                    <Tool $w={26}><HighlightIcon /></Tool>
                    <DropTool $w={9}><Drop /></DropTool>
                    <Tool $w={24}><ColorA bar="#d8182a" /></Tool>
                    <DropTool $w={9}><Drop /></DropTool>
                    <Chevron />
                </Toolbar>
            </Band>

            <RulerRow>
                <TabSelector>
                    <Svg width={9} height={9} viewBox="0 0 9 9">
                        <path d="M2 1v6h6" fill="none" stroke="#000" strokeWidth="2" />
                    </Svg>
                </TabSelector>
                <HorizontalRuler />
                <SplitCol>
                    <SplitBox />
                    <ScrollBtn $w={16}><MiniChev dir="u" /></ScrollBtn>
                </SplitCol>
            </RulerRow>

            <Middle>
                <VRulerCol>
                    <VerticalRuler />
                </VRulerCol>
                <Workspace>
                    <Page>
                        <DocTable>
                            <colgroup>
                                <col style={{ width: 139 }} />
                                <col style={{ width: 138 }} />
                                <col style={{ width: 139 }} />
                                <col style={{ width: 139 }} />
                            </colgroup>
                            <tbody>
                                <tr>
                                    <Td $h={68}><CellText $selected>Text</CellText></Td>
                                    <Td $h={68}><CellText>Text</CellText></Td>
                                    <Td $h={68} />
                                    <Td $h={68} />
                                </tr>
                                <tr>
                                    <Td $h={68}><CellText $selected>Text</CellText></Td>
                                    <Td $h={68} />
                                    <Td $h={68} />
                                    <Td $h={68} />
                                </tr>
                                <tr>
                                    <Td $h={43} />
                                    <Td $h={43} />
                                    <Td $h={43} />
                                    <Td $h={43} />
                                </tr>
                                <tr>
                                    <Td $h={42} />
                                    <Td $h={42} />
                                    <Td $h={42} />
                                    <Td $h={42} />
                                </tr>
                            </tbody>
                        </DocTable>
                    </Page>
                </Workspace>
                <ScrollCol>
                    <VThumb />
                    <VTrack />
                    <ScrollBtn $w={16}><MiniChev dir="d" /></ScrollBtn>
                    <ScrollGap $h={3} />
                    <Browse><BrowseIcon kind="up" /></Browse>
                    <Browse><BrowseIcon kind="dot" /></Browse>
                    <Browse><BrowseIcon kind="down" /></Browse>
                    <ScrollGap $h={1} />
                </ScrollCol>
            </Middle>

            <ViewBar>
                <ViewBtns>
                    <ViewBtn><ViewNormalIcon /></ViewBtn>
                    <ViewBtn><ViewWebIcon /></ViewBtn>
                    <ViewBtn $active><ViewPrintIcon /></ViewBtn>
                    <ViewBtn><ViewOutlineIcon /></ViewBtn>
                    <ViewBtn><ViewReadIcon /></ViewBtn>
                </ViewBtns>
                <ScrollBtn><MiniChev dir="l" /></ScrollBtn>
                <HTrack />
                <ScrollBtn><MiniChev dir="r" /></ScrollBtn>
            </ViewBar>

            <Band $h={27}>
                <Toolbar $w={594} $h={25} $lift={2}>
                    <Gripper />
                    <TextTool $w={38}><span><Key>D</Key>raw</span><Drop /></TextTool>
                    <Tool $w={26}><CursorIcon /></Tool>
                    <Sep $w={6} />
                    <TextTool $w={74}><span>A<Key>u</Key>toShapes</span><Drop /></TextTool>
                    <Tool><LineIcon /></Tool>
                    <Tool><ArrowIcon /></Tool>
                    <Tool><RectIcon /></Tool>
                    <Tool><OvalIcon /></Tool>
                    <Tool><TextBoxIcon /></Tool>
                    <Tool><WordArtIcon /></Tool>
                    <Tool><DiagramIcon /></Tool>
                    <Tool><ClipartIcon /></Tool>
                    <Tool><PictureIcon /></Tool>
                    <Sep $w={6} />
                    <Tool $w={20}><FillIcon /></Tool>
                    <DropTool $w={11}><Drop /></DropTool>
                    <Tool $w={24}><LineColorIcon /></Tool>
                    <DropTool $w={11}><Drop /></DropTool>
                    <Tool $w={24}><ColorA bar="#d8182a" /></Tool>
                    <DropTool $w={12}><Drop /></DropTool>
                    <Tool><LineStyleIcon /></Tool>
                    <Tool><DashIcon /></Tool>
                    <Tool><ArrowStyleIcon /></Tool>
                    <Tool><ShadowIcon /></Tool>
                    <Tool><CubeIcon /></Tool>
                    <Chevron />
                </Toolbar>
            </Band>

            <StatusBar>
                <StatusCell $w={190}>
                    <StatusText $w={68}>Page 1</StatusText>
                    <StatusText $w={75}>Sec 1</StatusText>
                    <StatusText $w={40}>1/1</StatusText>
                </StatusCell>
                <StatusCell $w={162}>
                    <StatusText $w={60}>At 2.5cm</StatusText>
                    <StatusText $w={44}>Ln 1</StatusText>
                    <StatusText $w={50}>Col 1</StatusText>
                </StatusCell>
                <StatusCell $w={28} $off>REC</StatusCell>
                <StatusCell $w={24} $off>TRK</StatusCell>
                <StatusCell $w={26} $off>EXT</StatusCell>
                <StatusCell $w={26} $off>OVR</StatusCell>
                <BookCell $w={42}><SpellBookIcon /></BookCell>
                <StatusCell $w={36} />
                <StatusCell $w={27} />
                <StatusCell $w={28} />
            </StatusBar>
            <BottomEdge />

            <CtxMenu>
                <CtxItem><CtxIcon><CutIcon /></CtxIcon><CtxLabel>Cu<Key>t</Key></CtxLabel></CtxItem>
                <CtxItem><CtxIcon><CopyIcon /></CtxIcon><CtxLabel><Key>C</Key>opy</CtxLabel></CtxItem>
                <CtxItem><CtxIcon><PasteIcon /></CtxIcon><CtxLabel><Key>P</Key>aste Cells</CtxLabel></CtxItem>
                <CtxItem><CtxIcon><PasteIcon /></CtxIcon><CtxLabel>Paste as <Key>N</Key>ested Table</CtxLabel></CtxItem>
                <CtxSep />
                <CtxItem><CtxIcon><InsertTableIcon /></CtxIcon><CtxLabel><Key>I</Key>nsert Table...</CtxLabel></CtxItem>
                <CtxItem><CtxIcon /><CtxLabel><Key>D</Key>elete Cells...</CtxLabel></CtxItem>
                <CtxItem><CtxIcon><MergeIcon /></CtxIcon><CtxLabel><Key>M</Key>erge Cells</CtxLabel></CtxItem>
                <CtxSep />
                <CtxItem><CtxIcon /><CtxLabel><Key>B</Key>orders and Shading...</CtxLabel></CtxItem>
                <CtxItem><CtxIcon><TextDirIcon /></CtxIcon><CtxLabel>Te<Key>x</Key>t Direction...</CtxLabel></CtxItem>
                <CtxItem $hot>
                    <CtxIcon><CellIcon col={0} row={0} /></CtxIcon>
                    <CtxLabel>Cell Ali<Key>g</Key>nment</CtxLabel>
                    <SubArrow $hot />
                </CtxItem>
                <CtxItem>
                    <CtxIcon />
                    <CtxLabel><Key>A</Key>utoFit</CtxLabel>
                    <SubArrow />
                </CtxItem>
                <CtxItem><CtxIcon /><CtxLabel>Table P<Key>r</Key>operties...</CtxLabel></CtxItem>
            </CtxMenu>

            <RedFrame>
                <Palette>
                    <PaletteTitle />
                    <PaletteGrid>
                        {[0, 1, 2].map((row) =>
                            [0, 1, 2].map((col) => (
                                <PaletteCell
                                    key={`${row}${col}`}
                                    $state={row === 0 && col === 0 ? 'on' : row === 1 && col === 1 ? 'hover' : undefined}
                                >
                                    <CellIcon col={col} row={row} />
                                </PaletteCell>
                            )),
                        )}
                    </PaletteGrid>
                </Palette>
            </RedFrame>

            <Watermark>Buaxua.vn</Watermark>
        </Window>
    );
}
